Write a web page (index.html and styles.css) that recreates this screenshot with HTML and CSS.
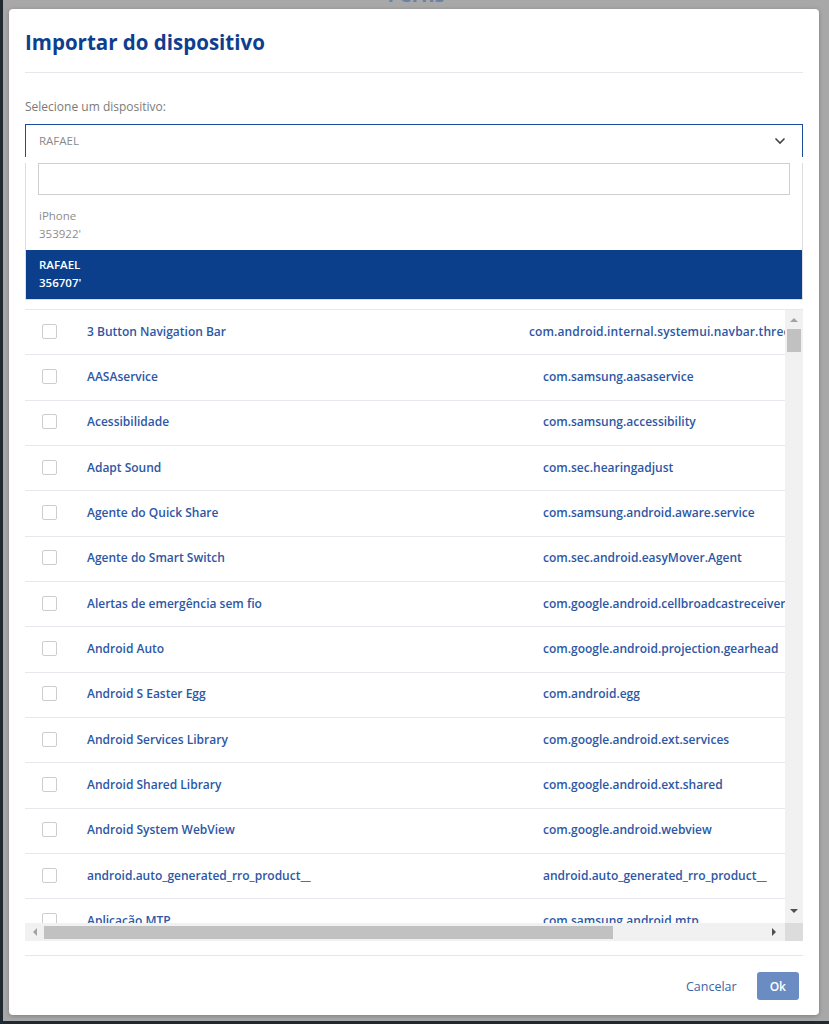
FILE: index.html
```html
<!DOCTYPE html>
<html lang="pt-BR">
<head>
  <meta charset="UTF-8" />
  <meta name="viewport" content="width=device-width, initial-scale=1.0"/>
  <title>Importar do dispositivo</title>
  <link rel="stylesheet" href="styles.css">
</head>
<body>

  <div class="backdrop">
    <h2 class="page-title">Perfis</h2>

    <div class="modal">
      <h1 class="modal-title">Importar do dispositivo</h1>

      <div class="field-label">Selecione um dispositivo:</div>
      <div class="select">
        <span>RAFAEL</span>
        <svg class="chevron" width="12" height="8" viewBox="0 0 12 8">
          <polyline points="1.5,1.5 6,6 10.5,1.5" fill="none" stroke="#444" stroke-width="1.6"/>
        </svg>
      </div>
      <div class="dropdown">
        <div class="search"></div>
        <div class="option">iPhone<br>353922'</div>
        <div class="option selected">RAFAEL<br>356707'</div>
      </div>

      <div class="table-box">
        <div class="viewport">
          <div class="row"><div class="c-check"><span class="box"></span></div><div class="c-name">3 Button Navigation Bar</div><div class="c-pkg long">com.android.internal.systemui.navbar.threebutton</div></div>
          <div class="row"><div class="c-check"><span class="box"></span></div><div class="c-name">AASAservice</div><div class="c-pkg">com.samsung.aasaservice</div></div>
          <div class="row"><div class="c-check"><span class="box"></span></div><div class="c-name">Acessibilidade</div><div class="c-pkg">com.samsung.accessibility</div></div>
          <div class="row"><div class="c-check"><span class="box"></span></div><div class="c-name">Adapt Sound</div><div class="c-pkg">com.sec.hearingadjust</div></div>
          <div class="row"><div class="c-check"><span class="box"></span></div><div class="c-name">Agente do Quick Share</div><div class="c-pkg">com.samsung.android.aware.service</div></div>
          <div class="row"><div class="c-check"><span class="box"></span></div><div class="c-name">Agente do Smart Switch</div><div class="c-pkg">com.sec.android.easyMover.Agent</div></div>
          <div class="row"><div class="c-check"><span class="box"></span></div><div class="c-name">Alertas de emergência sem fio</div><div class="c-pkg">com.google.android.cellbroadcastreceiver</div></div>
          <div class="row"><div class="c-check"><span class="box"></span></div><div class="c-name">Android Auto</div><div class="c-pkg">com.google.android.projection.gearhead</div></div>
          <div class="row"><div class="c-check"><span class="box"></span></div><div class="c-name">Android S Easter Egg</div><div class="c-pkg">com.android.egg</div></div>
          <div class="row"><div class="c-check"><span class="box"></span></div><div class="c-name">Android Services Library</div><div class="c-pkg">com.google.android.ext.services</div></div>
          <div class="row"><div class="c-check"><span class="box"></span></div><div class="c-name">Android Shared Library</div><div class="c-pkg">com.google.android.ext.shared</div></div>
          <div class="row"><div class="c-check"><span class="box"></span></div><div class="c-name">Android System WebView</div><div class="c-pkg">com.google.android.webview</div></div>
          <div class="row"><div class="c-check"><span class="box"></span></div><div class="c-name">android.auto_generated_rro_product__</div><div class="c-pkg">android.auto_generated_rro_product__</div></div>
          <div class="row"><div class="c-check"><span class="box"></span></div><div class="c-name">Aplicação MTP</div><div class="c-pkg">com.samsung.android.mtp</div></div>
        </div>
        <div class="vbar">
          <span class="arrow up"></span>
          <span class="vthumb"></span>
          <span class="fill"></span>
          <span class="arrow down"></span>
        </div>
        <div class="hbar">
          <span class="arrow left"></span>
          <span class="hthumb"></span>
          <span class="fill"></span>
          <span class="arrow right"></span>
        </div>
        <div class="corner"></div>
      </div>

      <div class="footer">
        <span class="link-btn">Cancelar</span>
        <span class="ok-btn">Ok</span>
      </div>
    </div>
  </div>

</body>
</html>
```

FILE: styles.css
```css
body {
  margin: 0;
  height: 1024px;
  overflow: hidden;
  background: #1f2930;
  font-family: "Open Sans", Arial, sans-serif;
}

.backdrop {
  position: relative;
  margin-left: 3px;
  height: 1021px;
  background: #a8a8a8;
  overflow: hidden;
}

.page-title {
  margin: -19px 0 0;
  text-align: center;
  font-size: 20px;
  line-height: 28px;
  font-weight: 700;
  color: #6d80a4;
}

/* dialog over the page */
.modal {
  position: absolute;
  top: 9px;
  left: 6px;
  width: 810px;
  height: 1006px;
  box-sizing: border-box;
  padding: 0 16px;
  background: #fff;
  border-radius: 4px;
  box-shadow: 0 1px 4px rgba(0, 0, 0, 0.25);
}

.modal-title {
  margin: 0;
  padding: 19px 0 16px;
  font-size: 20.5px;
  line-height: 28px;
  font-weight: 700;
  color: #0e3e8e;
  border-bottom: 1px solid #e4e7eb;
}

.field-label {
  margin-top: 26px;
  font-size: 12px;
  line-height: 16px;
  color: #7a7a7a;
}

.select {
  margin-top: 9px;
  height: 33px;
  box-sizing: border-box;
  padding: 0 16px 0 13px;
  display: flex;
  align-items: center;
  justify-content: space-between;
  border: 1px solid #1b4b9b;
  border-bottom: none;
  font-size: 11.5px;
  color: #8a8a8a;
}

.select span {
  margin-top: -2px;
}

.dropdown {
  border: 1px solid #dedede;
  border-top: none;
}

.search {
  margin: 6px 12px;
  height: 32px;
  box-sizing: border-box;
  border: 1px solid #cfcfcf;
}

.option {
  padding: 6px 13px 7px;
  font-size: 11.5px;
  line-height: 18px;
  color: #8c8c8c;
}

.option.selected {
  background: #0b3f8c;
  color: #fff;
  font-weight: 600;
}

.table-box {
  margin-top: 9px;
  border-top: 1px solid #e6e8ec;
  display: grid;
  grid-template-columns: 1fr 18px;
  grid-template-rows: 613px 18px;
}

.viewport {
  overflow: hidden;
}

.row {
  width: 975px;
  height: 45.33px;
  box-sizing: border-box;
  display: flex;
  align-items: center;
  padding-bottom: 2px;
  border-bottom: 1px solid #e5e8ec;
  font-size: 12px;
  font-weight: 600;
  color: #2d57a5;
  white-space: nowrap;
}

.c-check {
  width: 62px;
  padding-left: 17px;
  box-sizing: border-box;
  display: flex;
}

.box {
  width: 15px;
  height: 15px;
  box-sizing: border-box;
  border: 1px solid #cdcdcd;
  border-radius: 2px;
}

.c-name {
  width: 456px;
}

.c-pkg.long {
  margin-left: -14px;
  letter-spacing: 0.12px;
}

.vbar,
.hbar {
  background: #f1f1f1;
  display: flex;
  align-items: center;
}

.vbar {
  flex-direction: column;
}

.fill {
  flex: 1;
}

.arrow {
  width: 0;
  height: 0;
  border: 4px solid transparent;
}

.arrow.up {
  margin-top: 4px;
  border-bottom-color: #a3a3a3;
}

.arrow.down {
  margin-bottom: 6px;
  border-top-color: #505050;
}

.arrow.left {
  margin-left: 4px;
  border-right-color: #a3a3a3;
}

.arrow.right {
  margin-right: 5px;
  border-left-color: #505050;
}

.vthumb {
  margin-top: 7px;
  width: 14px;
  height: 23px;
  background: #c1c1c1;
}

.hthumb {
  margin-left: 7px;
  width: 569px;
  height: 13px;
  background: #c1c1c1;
}

.corner {
  background: #dcdcdc;
}

.footer {
  margin-top: 14px;
  border-top: 1px solid #e4e7eb;
  padding: 16px 4px 0 0;
  display: flex;
  justify-content: flex-end;
  align-items: center;
  gap: 20px;
  font-size: 12px;
}

.link-btn {
  color: #3b64a8;
  font-size: 12.5px;
}

.ok-btn {
  height: 28px;
  padding: 0 13px;
  display: flex;
  align-items: center;
  background: #6b8cc2;
  color: #fff;
  border-radius: 3px;
  font-weight: 600;
}
```
